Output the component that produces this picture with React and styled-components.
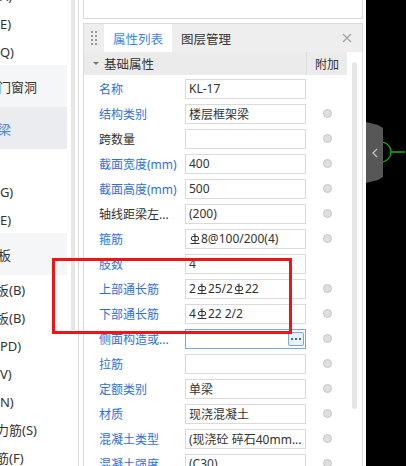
import React from 'react'
import styled, { createGlobalStyle } from 'styled-components'

const GlobalStyle = createGlobalStyle`
  html, body {
    margin: 0;
    padding: 0;
    background: #fff;
  }
  body {
    font-family: 'Noto Sans', 'Noto Sans CJK SC', sans-serif;
    font-size: 12px;
    color: #333;
  }
`

const Screen = styled.div`
  position: relative;
  width: 406px;
  height: 466px;
  display: flex;
  overflow: hidden;
  background: #fff;
`

/* ---------- left tree ---------- */

const Tree = styled.div`
  width: 67px;
  flex: none;
  display: flex;
  flex-direction: column;
  margin-top: -19px;
  overflow: hidden;
`

const TreeItem = styled.div`
  height: ${p => (p.group ? 42 : 28)}px;
  flex: none;
  display: flex;
  align-items: center;
  white-space: nowrap;
  background: ${p => (p.selected ? '#ebecf0' : p.group ? '#f5f6f8' : '#fff')};
  color: ${p => (p.selected ? '#4a84e6' : '#333')};
  font-size: 13px;
`

const TreeText = styled.span`
  margin-left: ${p => (p.group ? -2 : -30)}px;
`

const TreeScroll = styled.div`
  width: 12px;
  flex: none;
  display: flex;
  padding-left: 4px;
  box-sizing: border-box;
  border-right: 1px solid #dcdcdc;
`

const TreeThumb = styled.div`
  width: 4px;
  height: 330px;
  background: #e6e6e6;
`

/* ---------- property column ---------- */

const PropColumn = styled.div`
  width: 280px;
  flex: none;
  margin-left: 4px;
  display: flex;
  flex-direction: column;
  gap: 4px;
  min-height: 0;
`

const UpperBox = styled.div`
  flex: none;
  height: 18px;
  margin-top: -1px;
  border: 1px solid #dcdcdc;
  background: #fff;
`

const Panel = styled.div`
  flex: 1;
  min-height: 0;
  overflow: hidden;
  border: 1px solid #dcdcdc;
  border-bottom: none;
  display: flex;
  flex-direction: column;
`

const TabBar = styled.div`
  flex: none;
  height: 28px;
  background: #eeeeef;
  display: flex;
  align-items: stretch;
`

const Grip = styled.div`
  width: 20px;
  display: grid;
  grid-template-columns: 2px 2px;
  grid-auto-rows: 2px;
  column-gap: 2px;
  row-gap: 2px;
  align-content: center;
  justify-content: center;
  span {
    background: #9a9a9a;
  }
`

const Tab = styled.div`
  width: 68px;
  display: flex;
  align-items: center;
  justify-content: center;
  font-size: 12.5px;
  background: ${p => (p.active ? '#fff' : 'transparent')};
  color: ${p => (p.active ? '#3a86f0' : '#333')};
`

const CloseBtn = styled.div`
  margin-left: auto;
  width: 30px;
  display: flex;
  align-items: center;
  justify-content: center;
`

const Body = styled.div`
  flex: 1;
  min-height: 0;
  display: flex;
`

const Table = styled.div`
  width: 263px;
  display: flex;
  flex-direction: column;
`

const SectionRow = styled.div`
  flex: none;
  height: 23px;
  display: flex;
  background: #ebebeb;
`

const SectionTitle = styled.div`
  flex: 1;
  display: flex;
  align-items: center;
  gap: 5px;
  padding-left: 9px;
  font-size: 12.5px;
  color: #333;
`

const Caret = styled.span`
  width: 0;
  height: 0;
  border-left: 3px solid transparent;
  border-right: 3px solid transparent;
  border-top: 3px solid #777;
`

const ExtraHead = styled.div`
  width: 40px;
  border-left: 1px solid #dedede;
  display: flex;
  align-items: center;
  justify-content: center;
  font-size: 12px;
  color: #333;
`

const Rows = styled.div`
  padding-top: 1px;
  display: flex;
  flex-direction: column;
`

const Row = styled.div`
  height: 25px;
  flex: none;
  display: flex;
  align-items: center;
`

const Label = styled.div`
  width: 86px;
  padding-left: 15px;
  white-space: nowrap;
  overflow: hidden;
  color: ${p => (p.plain ? '#333' : '#2f6fdc')};
`

const Value = styled.div`
  width: 121px;
  height: 20px;
  box-sizing: border-box;
  border: 1px solid ${p => (p.focused ? '#7aa6e6' : '#dadada')};
  background: #fff;
  display: flex;
  align-items: center;
  padding-left: 3px;
  white-space: nowrap;
  overflow: hidden;
  color: #333;
`

const MoreBtn = styled.div`
  margin-left: auto;
  margin-right: 1px;
  width: 16px;
  height: 14px;
  box-sizing: border-box;
  border: 1px solid #7aa6e6;
  border-radius: 2px;
  background: #eaf2fd;
  display: flex;
  align-items: center;
  justify-content: center;
  gap: 2px;
  span {
    width: 2px;
    height: 2px;
    background: #2f6fdc;
  }
`

const RadioCell = styled.div`
  flex: 1;
  display: flex;
  justify-content: center;
  padding-left: 2px;
`

const Radio = styled.span`
  width: 9px;
  height: 9px;
  box-sizing: border-box;
  border-radius: 50%;
  border: 1px solid #c6c6c6;
  background: #dedede;
  visibility: ${p => (p.hidden ? 'hidden' : 'visible')};
`

const ScrollTrack = styled.div`
  flex: 1;
  display: flex;
  justify-content: center;
  padding-top: 10px;
`

const ScrollThumb = styled.div`
  width: 5px;
  height: 347px;
  border-radius: 3px;
  background: #e6e6e6;
`

/* ---------- canvas ---------- */

const Canvas = styled.div`
  position: relative;
  flex: 1;
  margin-left: 3px;
  background: #000;
`

const SideTab = styled.div`
  position: absolute;
  left: 0;
  top: 122px;
  width: 17px;
  height: 61px;
  background: #575757;
  clip-path: polygon(0 0, 12px 3px, 17px 6px, 17px 55px, 12px 58px, 0 61px);
  display: flex;
  align-items: center;
  justify-content: center;
`

const Overlay = styled.div`
  position: absolute;
  left: 52px;
  top: 258px;
  width: 240px;
  height: 76px;
  box-sizing: border-box;
  border: 3px solid #f01515;
  pointer-events: none;
`

const Rebar = () => (
  <svg width="10" height="12" viewBox="0 0 10 12" style={{ margin: '0 1px', flex: 'none' }}>
    <g stroke="#333" strokeWidth="1" fill="none">
      <path d="M5 0.5 V11" />
      <path d="M3.5 1.5 L5 2.5" />
      <rect x="1.5" y="3.5" width="7" height="4" rx="1.5" />
      <path d="M0.5 10.5 H9.5" />
    </g>
  </svg>
)

const R = () => <Rebar />

const rows = [
  { label: '名称', value: 'KL-17', noRadio: true },
  { label: '结构类别', value: '楼层框架梁' },
  { label: '跨数量', value: '', plain: true },
  { label: '截面宽度(mm)', value: '400' },
  { label: '截面高度(mm)', value: '500' },
  { label: '轴线距梁左...', value: '(200)', plain: true },
  { label: '箍筋', value: <><R />8@100/200(4)</> },
  { label: '肢数', value: '4', noRadio: true },
  { label: '上部通长筋', value: <>2<R />25/2<R />22</> },
  { label: '下部通长筋', value: <>4<R />22 2/2</> },
  { label: '侧面构造或...', value: '', focused: true },
  { label: '拉筋', value: '' },
  { label: '定额类别', value: '单梁' },
  { label: '材质', value: '现浇混凝土' },
  { label: '混凝土类型', value: '(现浇砼 碎石40mm...' },
  { label: '混凝土强度', value: '(C30)' }
]

const tree = [
  { text: '暗梁(A)' },
  { text: '墙垛(E)' },
  { text: '幕墙(Q)' },
  { text: '门窗洞', group: true },
  { text: '梁', group: true, selected: true },
  { text: '梁(L)' },
  { text: '连梁(G)' },
  { text: '圈梁(E)' },
  { text: '板', group: true },
  { text: '现浇板(B)' },
  { text: '螺旋板(B)' },
  { text: '柱帽(PD)' },
  { text: '柱墩(V)' },
  { text: '板洞(N)' },
  { text: '板受力筋(S)' },
  { text: '板负筋(F)' }
]

const App = () => (
  <Screen>
    <GlobalStyle />
    <Tree>
      {tree.map((t, i) => (
        <TreeItem key={i} group={t.group} selected={t.selected}>
          <TreeText group={t.group}>{t.text}</TreeText>
        </TreeItem>
      ))}
    </Tree>
    <TreeScroll>
      <TreeThumb />
    </TreeScroll>

    <PropColumn>
      <UpperBox />
      <Panel>
        <TabBar>
          <Grip>
            {Array.from({ length: 8 }).map((_, i) => <span key={i} />)}
          </Grip>
          <Tab active>属性列表</Tab>
          <Tab>图层管理</Tab>
          <CloseBtn>
            <svg width="10" height="10" viewBox="0 0 10 10">
              <path d="M1 1 L9 9 M9 1 L1 9" stroke="#a0a0a0" strokeWidth="1.2" />
            </svg>
          </CloseBtn>
        </TabBar>
        <Body>
          <Table>
            <SectionRow>
              <SectionTitle>
                <Caret />
                基础属性
              </SectionTitle>
              <ExtraHead>附加</ExtraHead>
            </SectionRow>
            <Rows>
              {rows.map((r, i) => (
                <Row key={i}>
                  <Label plain={r.plain}>{r.label}</Label>
                  <Value focused={r.focused}>
                    {r.value}
                    {r.focused && (
                      <MoreBtn>
                        <span />
                        <span />
                        <span />
                      </MoreBtn>
                    )}
                  </Value>
                  <RadioCell>
                    <Radio hidden={r.noRadio} />
                  </RadioCell>
                </Row>
              ))}
            </Rows>
          </Table>
          <ScrollTrack>
            <ScrollThumb />
          </ScrollTrack>
        </Body>
      </Panel>
    </PropColumn>

    <Canvas>
      <svg width="39" height="466" style={{ position: 'absolute', left: 0, top: 0 }}>
        <circle cx="15" cy="152" r="10" fill="none" stroke="#14b814" strokeWidth="1.2" />
        <path d="M15 145 V149 M15 155 V159" stroke="#14b814" strokeWidth="1" />
        <path d="M25 152 H39" stroke="#14b814" strokeWidth="1.5" />
      </svg>
      <SideTab>
        <svg width="6" height="10" viewBox="0 0 6 10">
          <path d="M5 1 L1 5 L5 9" stroke="#c4c4c4" strokeWidth="1.3" fill="none" />
        </svg>
      </SideTab>
    </Canvas>

    <Overlay />
  </Screen>
)

export default App
